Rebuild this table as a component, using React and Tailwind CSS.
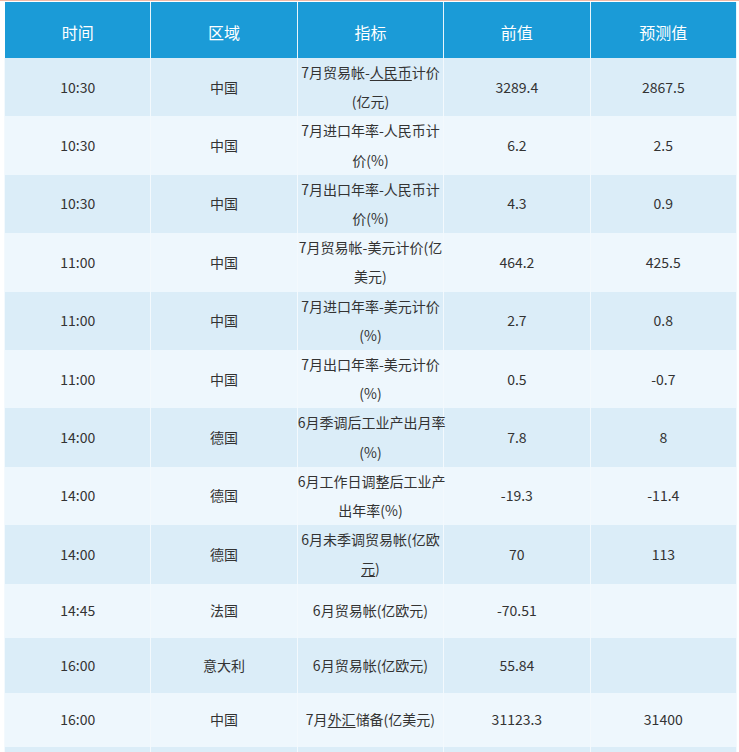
import React from 'react';

const rows = [
    { time: '10:30', area: '中国', name: [<>7月贸易帐-<span className="underline underline-offset-2">人民币</span>计价</>, '(亿元)'], prev: '3289.4', next: '2867.5' },
    { time: '10:30', area: '中国', name: ['7月进口年率-人民币计', '价(%)'], prev: '6.2', next: '2.5' },
    { time: '10:30', area: '中国', name: ['7月出口年率-人民币计', '价(%)'], prev: '4.3', next: '0.9' },
    { time: '11:00', area: '中国', name: ['7月贸易帐-美元计价(亿', '美元)'], prev: '464.2', next: '425.5' },
    { time: '11:00', area: '中国', name: ['7月进口年率-美元计价', '(%)'], prev: '2.7', next: '0.8' },
    { time: '11:00', area: '中国', name: ['7月出口年率-美元计价', '(%)'], prev: '0.5', next: '-0.7' },
    { time: '14:00', area: '德国', name: ['6月季调后工业产出月率', '(%)'], prev: '7.8', next: '8' },
    { time: '14:00', area: '德国', name: ['6月工作日调整后工业产', '出年率(%)'], prev: '-19.3', next: '-11.4' },
    { time: '14:00', area: '德国', name: ['6月未季调贸易帐(亿欧', <><span className="underline underline-offset-2">元</span>)</>], prev: '70', next: '113' },
    { time: '14:45', area: '法国', name: ['6月贸易帐(亿欧元)'], prev: '-70.51', next: '' },
    { time: '16:00', area: '意大利', name: ['6月贸易帐(亿欧元)'], prev: '55.84', next: '' },
    { time: '16:00', area: '中国', name: [<>7月<span className="underline underline-offset-2">外汇</span>储备(亿美元)</>], prev: '31123.3', next: '31400' },
];

const headers = ['时间', '区域', '指标', '前值', '预测值'];

function App() {
    return (
        <div
            className="min-h-screen bg-white pl-[4px] pr-[2px] border-t border-[#f2b9a5] pt-[1px]"
            style={{ fontFamily: '"Noto Sans CJK SC", "Noto Sans", sans-serif' }}
        >
            <table className="w-[733px] table-fixed border-collapse text-center">
                <thead>
                    <tr className="bg-[#1b9bd7] text-white text-[16px]">
                        {headers.map((h) => (
                            <th key={h} className="h-[56px] font-normal border-x border-white/90 p-0 pt-[4px]">
                                {h}
                            </th>
                        ))}
                    </tr>
                </thead>
                <tbody className="text-[14px] text-[#333]">
                    {rows.map((r, i) => (
                        <tr key={i} className={i % 2 === 0 ? 'bg-[#dbedf8]' : 'bg-[#eef7fd]'}>
                            <td className="h-[54.5px] p-0 leading-[29.2px] border-x border-[#f3f9fd]">{r.time}</td>
                            <td className="p-0 leading-[29.2px] border-x border-[#f3f9fd]">{r.area}</td>
                            <td className="p-0 leading-[29.2px] border-x border-[#f3f9fd]">
                                {r.name.map((line, j) => (
                                    <div key={j} className="whitespace-nowrap">{line}</div>
                                ))}
                            </td>
                            <td className="p-0 leading-[29.2px] border-x border-[#f3f9fd]">{r.prev}</td>
                            <td className="p-0 leading-[29.2px] border-x border-[#f3f9fd]">{r.next}</td>
                        </tr>
                    ))}
                    <tr className="bg-[#dbedf8]">
                        <td className="h-[54px] p-0 border-x border-[#f3f9fd]"></td>
                        <td className="p-0 border-x border-[#f3f9fd]"></td>
                        <td className="p-0 border-x border-[#f3f9fd]"></td>
                        <td className="p-0 border-x border-[#f3f9fd]"></td>
                        <td className="p-0 border-x border-[#f3f9fd]"></td>
                    </tr>
                </tbody>
            </table>
        </div>
    );
}

export default App;
